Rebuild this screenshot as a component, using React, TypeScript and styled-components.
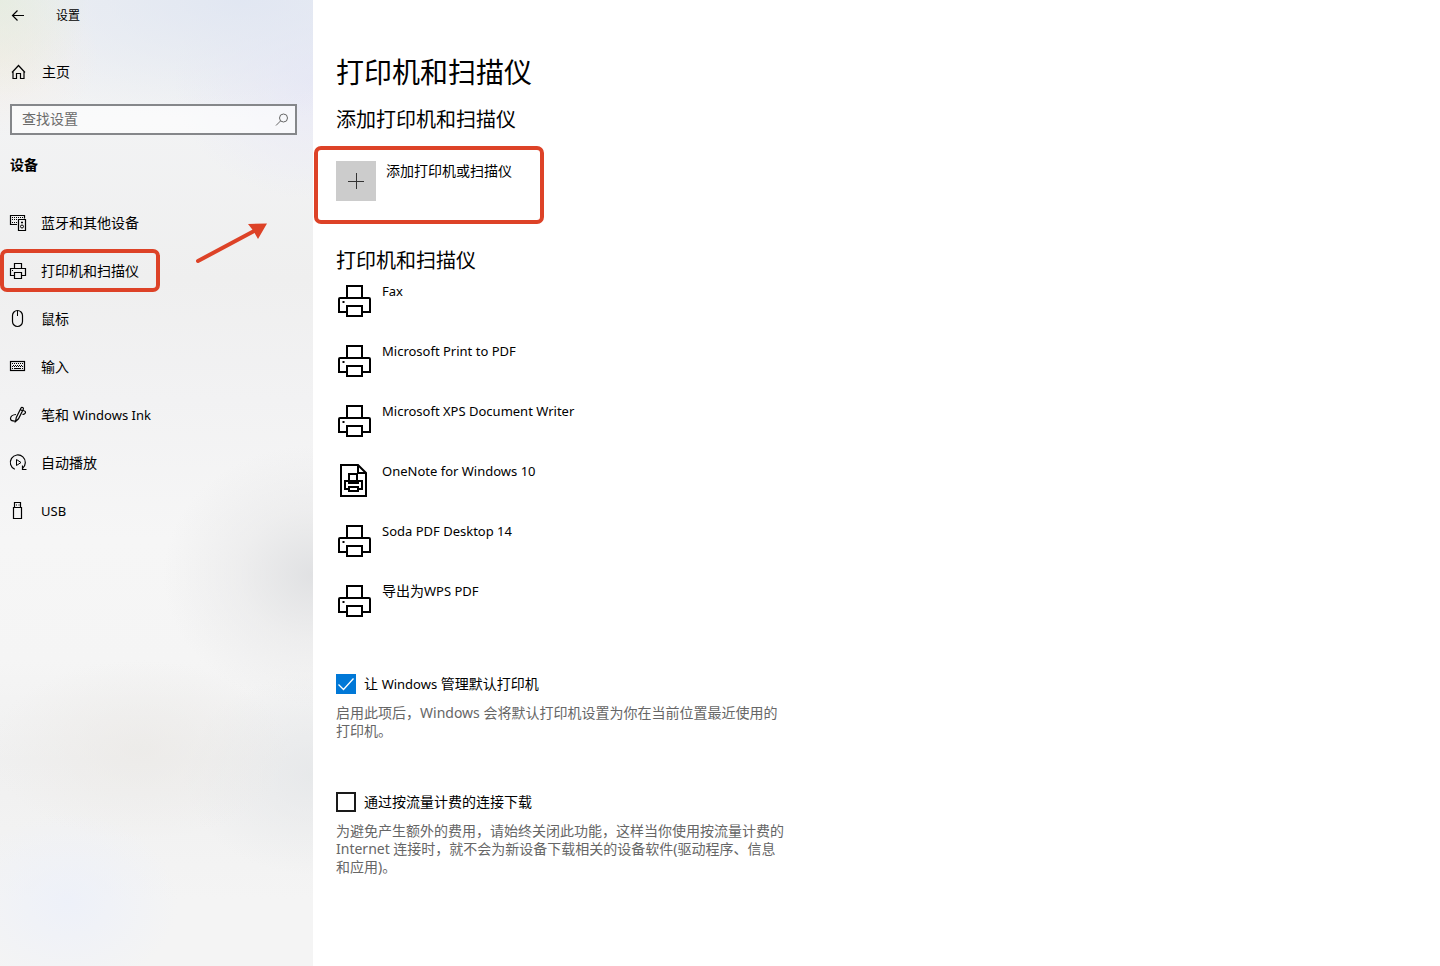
import React, { useState } from "react";
import styled, { createGlobalStyle, css } from "styled-components";

const ACCENT = "#0078d7";
const MARK = "#dd4227";

const GlobalStyle = createGlobalStyle`
  *, *::before, *::after { box-sizing: border-box; }
  body {
    margin: 0;
    background: #fff;
    color: #000;
    font-family: "Noto Sans", "Noto Sans CJK SC", sans-serif;
    font-size: 14px;
    line-height: 20px;
  }
  button, input { font: inherit; color: inherit; }
`;

const Window = styled.div`
  display: flex;
  min-height: 100vh;
`;

const Sidebar = styled.aside`
  position: relative;
  flex: 0 0 313px;
  padding-bottom: 24px;
  background:
    radial-gradient(ellipse 90px 100px at 0 0, rgba(228, 236, 220, 0.7), rgba(228, 236, 220, 0)),
    radial-gradient(ellipse 100px 80px at 0 55px, rgba(246, 236, 226, 0.6), rgba(246, 236, 226, 0)),
    radial-gradient(ellipse 300px 120px at 240px 0, rgba(224, 230, 242, 0.9), rgba(224, 230, 242, 0)),
    radial-gradient(ellipse 140px 120px at 313px 80px, rgba(232, 232, 246, 0.9), rgba(232, 232, 246, 0)),
    radial-gradient(ellipse 150px 130px at 313px 575px, rgba(222, 223, 225, 0.9), rgba(230, 230, 231, 0.5) 50%, rgba(240, 240, 240, 0)),
    radial-gradient(ellipse 150px 90px at 140px 750px, rgba(235, 233, 230, 0.7), rgba(235, 233, 230, 0)),
    radial-gradient(ellipse 130px 100px at 313px 775px, rgba(229, 231, 233, 0.8), rgba(229, 231, 233, 0)),
    radial-gradient(ellipse 110px 90px at 68px 902px, rgba(236, 240, 250, 0.8), rgba(236, 240, 250, 0)),
    linear-gradient(#eef0f2 0, #f2f3f4 120px, #efefef 280px, #f2f2f3 400px, #f6f6f6 540px, #f5f5f5 660px, #f0f0f0 760px, #f4f4f4 900px);
`;

const TitleBar = styled.header`
  display: flex;
  align-items: center;
  gap: 28px;
  height: 32px;
  padding-left: 8px;
  font-size: 12px;
`;

const BackButton = styled.button`
  display: flex;
  padding: 0;
  border: 0;
  background: none;
`;

const NavLink = styled.a<{ $marked?: boolean }>`
  position: relative;
  display: flex;
  align-items: center;
  gap: 13px;
  height: 48px;
  padding-left: 8px;
  color: inherit;
  text-decoration: none;

  ${({ $marked }) =>
    $marked &&
    css`
      &::after {
        content: "";
        position: absolute;
        inset: 2px auto 3px 0;
        width: 160px;
        border: 4px solid ${MARK};
        border-radius: 7px;
      }
    `}
`;

const HomeLink = styled(NavLink)`
  margin-top: 16px;
  gap: 14px;
`;

const Search = styled.label`
  display: flex;
  align-items: center;
  height: 31px;
  margin: 8px 16px 0 10px;
  padding: 0 5px 0 10px;
  border: 2px solid #85878a;
  background: rgba(255, 255, 255, 0.6);
`;

const SearchInput = styled.input`
  flex: 1;
  min-width: 0;
  padding: 0 0 2px;
  border: 0;
  outline: 0;
  background: none;
  &::placeholder { color: #6b6b6b; opacity: 1; }
`;

const SideHeading = styled.h2`
  margin: 20px 0 24px 10px;
  font-size: 14px;
  line-height: 20px;
  font-weight: 700;
`;

const Arrow = styled.svg`
  position: absolute;
  left: 192px;
  top: 218px;
`;

const Main = styled.main`
  flex: 1;
  min-width: 0;
  padding: 54px 24px 24px 23px;
`;

const Title = styled.h1`
  margin: 0 0 16px;
  font-size: 28px;
  line-height: 36px;
  font-weight: 400;
`;

const SubTitle = styled.h2`
  margin: 0;
  font-size: 20px;
  line-height: 28px;
  font-weight: 400;
`;

const AddButton = styled.button`
  position: relative;
  display: flex;
  align-items: flex-start;
  gap: 10px;
  margin: 27px 0 46px;
  padding: 0;
  border: 0;
  background: none;

  &::after {
    content: "";
    position: absolute;
    inset: -15px -32px -23px -22px;
    border: 4px solid ${MARK};
    border-radius: 7px;
  }
`;

const PlusTile = styled.span`
  display: grid;
  place-items: center;
  width: 40px;
  height: 40px;
  background: #ccc;
`;

const PrinterList = styled.ul`
  margin: 6px 0 33px;
  padding: 0;
  list-style: none;
`;

const PrinterRow = styled.li`
  display: flex;
  gap: 9px;
  height: 60px;
  padding-left: 1px;

  svg { margin-top: 2px; }
`;

const Latin = styled.span`
  font-size: 13px;
`;

const Option = styled.section`
  max-width: 448px;
  margin-bottom: 52px;
`;

const OptionLabel = styled.label`
  display: flex;
  align-items: center;
  gap: 8px;
  margin-bottom: 10px;
`;

const CheckWrap = styled.span`
  display: grid;
  width: 20px;
  height: 20px;
  & > * { grid-area: 1 / 1; }
  svg { pointer-events: none; }
`;

const Checkbox = styled.input`
  appearance: none;
  width: 20px;
  height: 20px;
  margin: 0;
  border: 2px solid #1a1a1a;
  background: #fff;
  &:checked { border-color: ${ACCENT}; background: ${ACCENT}; }
`;

const Description = styled.p`
  margin: 0;
  line-height: 18px;
  color: #666;
`;

const Glyph = ({ children }: { children: React.ReactNode }) => (
  <svg width="20" height="20" viewBox="0 0 20 20" fill="none" stroke="#000" strokeWidth="1" aria-hidden="true">
    {children}
  </svg>
);

const BackIcon = () => (
  <Glyph>
    <path d="M16 9.5H4.5M9.5 4.5l-5 5 5 5" strokeWidth="1.2" />
  </Glyph>
);

const HomeIcon = () => (
  <Glyph>
    <path d="M5 9v7.500h3.500v-5h4v5H16V9M4 10.500l6.500-7 6.500 7" strokeWidth="1.2" />
  </Glyph>
);

const DevicesIcon = () => (
  <Glyph>
    <path d="M9 11.500H2.500v-9h14v3M10.500 6.500h7v11h-7z" strokeWidth="1.2" />
    <path d="M4 4.500h11M4 6.500h5M4 9.500h5" strokeDasharray="1 1" />
    <circle cx="14" cy="13.500" r="1.500" />
    <path d="M13 9.500h2" strokeWidth="1.500" />
  </Glyph>
);

const SmallPrinterIcon = () => (
  <Glyph>
    <path d="M6.500 7.500v-5h7v5M6 14.500H2.500v-7h15v7H14M6.500 11.500h7v6h-7z" strokeWidth="1.2" />
    <path d="M4 9.500h1" />
  </Glyph>
);

const MouseIcon = () => (
  <Glyph>
    <rect x="4.500" y="1.500" width="10" height="16" rx="5" strokeWidth="1.2" />
    <path d="M9.500 2v5" />
  </Glyph>
);

const KeyboardIcon = () => (
  <Glyph>
    <rect x="2.500" y="4.500" width="14" height="9" strokeWidth="1.2" />
    <path d="M4 6.500h11M5 8.500h10M4 9.500h11" strokeDasharray="1 1" />
    <path d="M4 11.500h1M6 11.500h7M14 11.500h1" />
  </Glyph>
);

const PenIcon = () => (
  <Glyph>
    <path d="M7.500 16.500l.8-4L13 3c.8-1.300 3-.3 2.300 1.200l-4.800 9.600zM12 4.500l3 1.500" strokeWidth="1.2" />
    <path d="M8 9.500c-3 .2-5.500 2-5.500 4.200 0 1.800 2 2.500 5 2.300M15 5.500c2 .2 3 1.500 2.200 2.800-.5.800-1.700 1.200-2.700 1" strokeWidth="1.2" />
  </Glyph>
);

const AutoPlayIcon = () => (
  <Glyph>
    <path d="M6.800 16.300A7.500 7.500 0 1 1 14.500 15.300" strokeWidth="1.2" />
    <path d="M14.500 12.500v4h4" strokeWidth="1.2" />
    <path d="M8.500 6.500v6l4.500-3z" />
  </Glyph>
);

const UsbIcon = () => (
  <Glyph>
    <path d="M5.500 6.500h8v11h-8zM6.500 6.500v-5h6v5" strokeWidth="1.2" />
    <path d="M8 4h1M10.500 4h1" />
  </Glyph>
);

const SearchIcon = () => (
  <svg width="16" height="16" viewBox="0 0 16 16" fill="none" stroke="#666" aria-hidden="true">
    <circle cx="9.500" cy="6" r="4" />
    <path d="M6.600 8.900L2 13.500" />
  </svg>
);

const PlusIcon = () => (
  <svg width="18" height="18" viewBox="0 0 18 18" stroke="#333" aria-hidden="true">
    <path d="M1 9.500h16M9.500 1v16" />
  </svg>
);

const PrinterIcon = () => (
  <svg width="36" height="36" viewBox="0 0 36 36" fill="none" stroke="#000" strokeWidth="2" aria-hidden="true">
    <path d="M10 15V3h15v12M10 29H2V16q0-1 1-1h29q1 0 1 1v13h-8M10 23h15v10H10z" />
    <path d="M5.500 19h2" />
  </svg>
);

const DocumentPrinterIcon = () => (
  <svg width="36" height="36" viewBox="0 0 36 36" fill="none" stroke="#000" strokeWidth="2" aria-hidden="true">
    <path d="M4 2h17l8 8v23H4zM21 2v8h8" />
    <path d="M12 18v-7h8v7M12 26H8v-8h17v8h-4M12 24h9v4h-9zM12 18v2h9v-2" />
  </svg>
);

const CheckMark = () => (
  <svg width="20" height="20" viewBox="0 0 20 20" fill="none" stroke="#fff" strokeWidth="1.300" aria-hidden="true">
    <path d="M2.500 10.500l5 5 10-11" />
  </svg>
);

const NAV = [
  { label: "蓝牙和其他设备", Icon: DevicesIcon },
  { label: "打印机和扫描仪", Icon: SmallPrinterIcon, marked: true },
  { label: "鼠标", Icon: MouseIcon },
  { label: "输入", Icon: KeyboardIcon },
  { label: <>笔和 <Latin>Windows Ink</Latin></>, Icon: PenIcon },
  { label: "自动播放", Icon: AutoPlayIcon },
  { label: <Latin>USB</Latin>, Icon: UsbIcon },
];

const PRINTERS = [
  { name: <Latin>Fax</Latin>, Icon: PrinterIcon },
  { name: <Latin>Microsoft Print to PDF</Latin>, Icon: PrinterIcon },
  { name: <Latin>Microsoft XPS Document Writer</Latin>, Icon: PrinterIcon },
  { name: <Latin>OneNote for Windows 10</Latin>, Icon: DocumentPrinterIcon },
  { name: <Latin>Soda PDF Desktop 14</Latin>, Icon: PrinterIcon },
  { name: <>导出为<Latin>WPS PDF</Latin></>, Icon: PrinterIcon },
];

type CheckOptionProps = {
  label: React.ReactNode;
  initial: boolean;
  children: React.ReactNode;
};

function CheckOption({ label, initial, children }: CheckOptionProps) {
  const [checked, setChecked] = useState(initial);
  return (
    <Option>
      <OptionLabel>
        <CheckWrap>
          <Checkbox type="checkbox" checked={checked} onChange={(e) => setChecked(e.target.checked)} />
          {checked && <CheckMark />}
        </CheckWrap>
        <span>{label}</span>
      </OptionLabel>
      <Description>{children}</Description>
    </Option>
  );
}

export default function App() {
  return (
    <>
      <GlobalStyle />
      <Window>
        <Sidebar>
          <TitleBar>
            <BackButton type="button" aria-label="返回"><BackIcon /></BackButton>
            <span>设置</span>
          </TitleBar>
          <HomeLink href="#home"><HomeIcon /><span>主页</span></HomeLink>
          <Search>
            <SearchInput type="text" placeholder="查找设置" aria-label="查找设置" />
            <SearchIcon />
          </Search>
          <SideHeading>设备</SideHeading>
          <nav>
            {NAV.map(({ label, Icon, marked }, i) => (
              <NavLink key={i} href="#devices" $marked={marked}>
                <Icon />
                <span>{label}</span>
              </NavLink>
            ))}
          </nav>
          <Arrow width="80" height="48" viewBox="0 0 80 48" fill={MARK} aria-hidden="true">
            <path d="M6 43L64 12" stroke={MARK} strokeWidth="4" strokeLinecap="round" />
            <path d="M75 5.500L56 6l5.500 7L66 21z" />
          </Arrow>
        </Sidebar>
        <Main>
          <Title>打印机和扫描仪</Title>
          <SubTitle>添加打印机和扫描仪</SubTitle>
          <AddButton type="button">
            <PlusTile><PlusIcon /></PlusTile>
            <span>添加打印机或扫描仪</span>
          </AddButton>
          <SubTitle>打印机和扫描仪</SubTitle>
          <PrinterList>
            {PRINTERS.map(({ name, Icon }, i) => (
              <PrinterRow key={i}>
                <Icon />
                <span>{name}</span>
              </PrinterRow>
            ))}
          </PrinterList>
          <CheckOption initial label={<>让 <Latin>Windows</Latin> 管理默认打印机</>}>
            启用此项后，Windows 会将默认打印机设置为你在当前位置最近使用的打印机。
          </CheckOption>
          <CheckOption initial={false} label="通过按流量计费的连接下载">
            为避免产生额外的费用，请始终关闭此功能，这样当你使用按流量计费的 Internet 连接时，就不会为新设备下载相关的设备软件(驱动程序、信息和应用)。
          </CheckOption>
        </Main>
      </Window>
    </>
  );
}
